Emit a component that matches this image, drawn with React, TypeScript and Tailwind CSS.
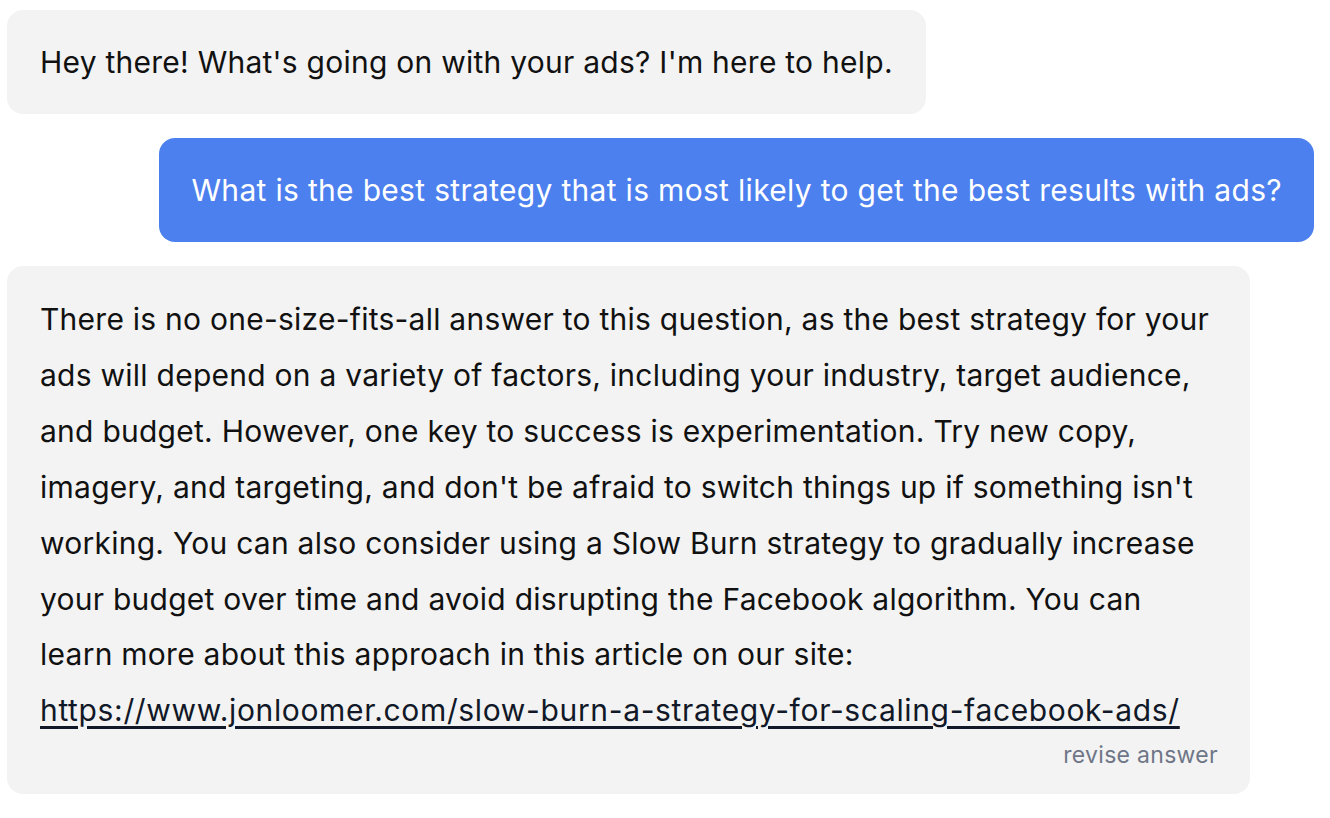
import React from "react";

interface Message {
  id: number;
  role: "bot" | "user";
  text: string;
  link?: string;
  revisable?: boolean;
}

const messages: Message[] = [
  {
    id: 1,
    role: "bot",
    text: "Hey there! What's going on with your ads? I'm here to help.",
  },
  {
    id: 2,
    role: "user",
    text: "What is the best strategy that is most likely to get the best results with ads?",
  },
  {
    id: 3,
    role: "bot",
    text: "There is no one-size-fits-all answer to this question, as the best strategy for your ads will depend on a variety of factors, including your industry, target audience, and budget. However, one key to success is experimentation. Try new copy, imagery, and targeting, and don't be afraid to switch things up if something isn't working. You can also consider using a Slow Burn strategy to gradually increase your budget over time and avoid disrupting the Facebook algorithm. You can learn more about this approach in this article on our site:",
    link: "https://www.jonloomer.com/slow-burn-a-strategy-for-scaling-facebook-ads/",
    revisable: true,
  },
];

const Bubble: React.FC<{ message: Message }> = ({ message }) => {
  if (message.role === "user") {
    return (
      <div className="flex justify-end">
        <div className="bg-[#4c80ee] text-white rounded-[16px] pl-[33px] pr-[32px] py-6 text-[30px] leading-[56px] tracking-[0.31px] max-w-[95%]">
          {message.text}
        </div>
      </div>
    );
  }

  return (
    <div className="flex justify-start">
      <div
        className={
          message.revisable
            ? "bg-[#f3f3f3] text-[#111] rounded-[16px] pl-[33px] pr-[32px] pt-[26px] pb-[22px] text-[30px] leading-[55.9px] tracking-[0.25px] max-w-[1243px]"
            : "bg-[#f3f3f3] text-[#111] rounded-[16px] px-[33px] py-6 text-[30px] leading-[56px] tracking-[0.25px] max-w-[1243px]"
        }
      >
        <p>{message.text}</p>
        {message.link && (
          <a href="#" className="text-[#111827] underline underline-offset-[5px] decoration-[2.5px] tracking-[0.65px]">
            {message.link}
          </a>
        )}
        {message.revisable && (
          <div className="text-right text-[23px] leading-[33px] tracking-[0.3px] text-[#6f7687]">
            revise answer
          </div>
        )}
      </div>
    </div>
  );
};

export default function App() {
  return (
    <div
      className="min-h-screen bg-white pl-[7px] pr-[16px] pt-[10px] flex flex-col gap-6"
      style={{ fontFamily: "Inter, 'Noto Sans', sans-serif" }}
    >
      {messages.map((m) => (
        <Bubble key={m.id} message={m} />
      ))}
    </div>
  );
}
